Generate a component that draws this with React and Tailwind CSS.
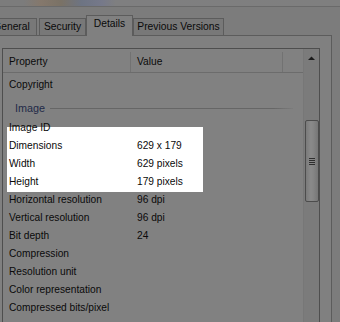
import React from "react";

const rowsA = [
  ["Image ID", ""],
  ["Dimensions", "629 x 179"],
  ["Width", "629 pixels"],
  ["Height", "179 pixels"],
  ["Horizontal resolution", "96 dpi"],
  ["Vertical resolution", "96 dpi"],
  ["Bit depth", "24"],
  ["Compression", ""],
  ["Resolution unit", ""],
  ["Color representation", ""],
  ["Compressed bits/pixel", ""],
];

function Row({ name, value }) {
  return (
    <div className="relative z-10 flex h-[18px] items-center">
      <div className="w-[128px] shrink-0 pl-[6px] whitespace-nowrap">{name}</div>
      <div className="pl-[6px] whitespace-nowrap">{value}</div>
    </div>
  );
}

export default function App() {
  return (
    <div
      className="relative flex h-[322px] w-[340px] flex-col overflow-hidden bg-[#7c7c7c] text-[10.2px] leading-none text-[#0a0a0a]"
      style={{ fontFamily: '"Liberation Sans", Arial, sans-serif' }}
    >
      {/* top blurred strip */}
      <div className="h-[7px] shrink-0 border-b border-[#6a6a6a] bg-[linear-gradient(to_right,#7c7c7c_0%,#7c7c7c_7%,#85786c_12%,#7a7266_18%,#6d7483_24%,#76798a_30%,#7f7f80_34%,#7f7f7f_100%)]" />

      {/* tab strip */}
      <div className="flex h-[28px] shrink-0 items-end">
        <div className="-ml-[14px] flex h-[17px] w-[51px] shrink-0 items-center justify-center border border-b-0 border-[#5c5c5c] bg-[#787878] text-[10.3px]">
          General
        </div>
        <div className="ml-[2px] flex h-[17px] w-[47px] shrink-0 items-center justify-center border border-b-0 border-[#5c5c5c] bg-[#787878] text-[10.3px]">
          Security
        </div>
        <div className="relative z-10 -mb-[1px] flex h-[21px] w-[47px] shrink-0 items-center justify-center border border-b-0 border-[#5c5c5c] bg-[#808080] pb-[3px] text-[10.3px]">
          Details
        </div>
        <div className="flex h-[17px] w-[91px] shrink-0 items-center justify-center border border-b-0 border-[#5c5c5c] bg-[#787878] text-[10.3px]">
          Previous Versions
        </div>
      </div>

      {/* panel */}
      <div className="-ml-[4px] mr-[8px] flex flex-1 flex-col border-t border-r border-[#5c5c5c] bg-[#808080] pt-[12px] pl-[6px] pr-[11px]">
        <div className="flex flex-1 border border-b-0 border-[#4e4e4e] bg-[#818181]">
          {/* main list */}
          <div className="flex flex-1 flex-col">
            <div className="flex h-[24px] shrink-0 border-b border-[#6c6c6c] pt-[3px]">
              <div className="flex w-[128px] items-center border-r border-[#727272] pl-[6px]">Property</div>
              <div className="flex w-[152px] items-center border-r border-[#727272] pl-[6px]">Value</div>
              <div className="flex-1" />
            </div>
            <div className="flex flex-col pt-[3px]">
              <Row name="Copyright" value="" />
              <div className="flex h-[25px] items-center pl-[12px] pt-[3px]">
                <span className="text-[10.8px] text-[#1f2a48]">Image</span>
                <div className="ml-[5px] mr-[10px] h-px flex-1 bg-[linear-gradient(to_right,#666_0%,#666_92%,#7c7c7c_100%)]" />
              </div>
              {rowsA.map(([n, v]) => (
                <Row key={n} name={n} value={v} />
              ))}
            </div>
          </div>
          {/* scrollbar */}
          <div className="relative flex w-[16px] shrink-0 flex-col items-center border-l border-[#777] bg-[#7b7b7b]">
            <svg width="7" height="5" viewBox="0 0 7 5" className="mt-[7px]">
              <path d="M0 4 L3.5 0.5 L7 4 Z" fill="#1a1a1a" />
            </svg>
            <div className="mt-[59px] flex h-[82px] w-[14px] items-center justify-center rounded-[2px] border border-[#4c4c4c] bg-[linear-gradient(to_right,#7a7a7a,#8a8a8a_40%,#868686_60%,#767676)]">
              <div className="flex flex-col gap-[1px]">
                <div className="h-px w-[6px] bg-[#2e2e2e]" />
                <div className="h-px w-[6px] bg-[#2e2e2e]" />
                <div className="h-px w-[6px] bg-[#2e2e2e]" />
                <div className="h-px w-[6px] bg-[#2e2e2e]" />
              </div>
            </div>
          </div>
        </div>
      </div>

      {/* highlight overlay (undimmed region) */}
      <div className="absolute left-[7px] top-[127px] z-0 h-[65px] w-[196px] bg-white" />
    </div>
  );
}
